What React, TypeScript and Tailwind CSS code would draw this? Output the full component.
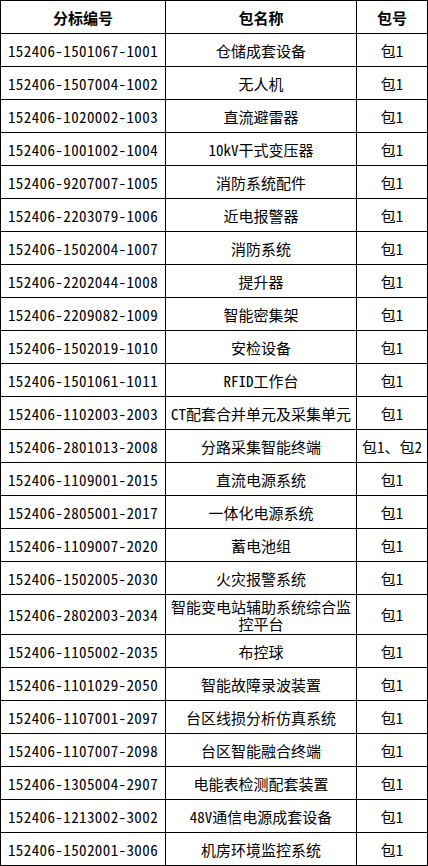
import React from "react";

const rows: [string, string, string][] = [
  ["152406-1501067-1001", "仓储成套设备", "包1"],
  ["152406-1507004-1002", "无人机", "包1"],
  ["152406-1020002-1003", "直流避雷器", "包1"],
  ["152406-1001002-1004", "10kV干式变压器", "包1"],
  ["152406-9207007-1005", "消防系统配件", "包1"],
  ["152406-2203079-1006", "近电报警器", "包1"],
  ["152406-1502004-1007", "消防系统", "包1"],
  ["152406-2202044-1008", "提升器", "包1"],
  ["152406-2209082-1009", "智能密集架", "包1"],
  ["152406-1502019-1010", "安检设备", "包1"],
  ["152406-1501061-1011", "RFID工作台", "包1"],
  ["152406-1102003-2003", "CT配套合并单元及采集单元", "包1"],
  ["152406-2801013-2008", "分路采集智能终端", "包1、包2"],
  ["152406-1109001-2015", "直流电源系统", "包1"],
  ["152406-2805001-2017", "一体化电源系统", "包1"],
  ["152406-1109007-2020", "蓄电池组", "包1"],
  ["152406-1502005-2030", "火灾报警系统", "包1"],
  ["152406-2802003-2034", "智能变电站辅助系统综合监控平台", "包1"],
  ["152406-1105002-2035", "布控球", "包1"],
  ["152406-1101029-2050", "智能故障录波装置", "包1"],
  ["152406-1107001-2097", "台区线损分析仿真系统", "包1"],
  ["152406-1107007-2098", "台区智能融合终端", "包1"],
  ["152406-1305004-2907", "电能表检测配套装置", "包1"],
  ["152406-1213002-3002", "48V通信电源成套设备", "包1"],
  ["152406-1502001-3006", "机房环境监控系统", "包1"],
];

export default function App() {
  return (
    <div className="w-[428px] h-[866px] bg-white overflow-hidden">
      <div
        className="grid grid-cols-[164px_190px_70px] gap-px bg-black p-px w-[428px] text-black text-[15px] leading-[17px] [font-feature-settings:'hwid'] "
        style={{ fontFamily: '"Noto Sans CJK SC", "Noto Sans", sans-serif' }}
      >
        <div className="bg-white h-[32px] flex items-center justify-center font-bold">分标编号</div>
        <div className="bg-white h-[32px] flex items-center justify-center font-bold">包名称</div>
        <div className="bg-white h-[32px] flex items-center justify-center font-bold">包号</div>
        {rows.map(([a, b, c]) => {
          const tall = b.length > 13;
          const h = tall ? "h-[39px]" : "h-[32px]";
          return (
            <React.Fragment key={a}>
              <div className={`bg-white ${h} flex items-center justify-center whitespace-nowrap tracking-[0.4px]`}>{a}</div>
              <div className={`bg-white ${h} flex items-center justify-center text-center ${tall ? "px-[3px]" : "whitespace-nowrap"}`}>{b}</div>
              <div className={`bg-white ${h} flex items-center justify-center whitespace-nowrap`}>{c}</div>
            </React.Fragment>
          );
        })}
      </div>
    </div>
  );
}
